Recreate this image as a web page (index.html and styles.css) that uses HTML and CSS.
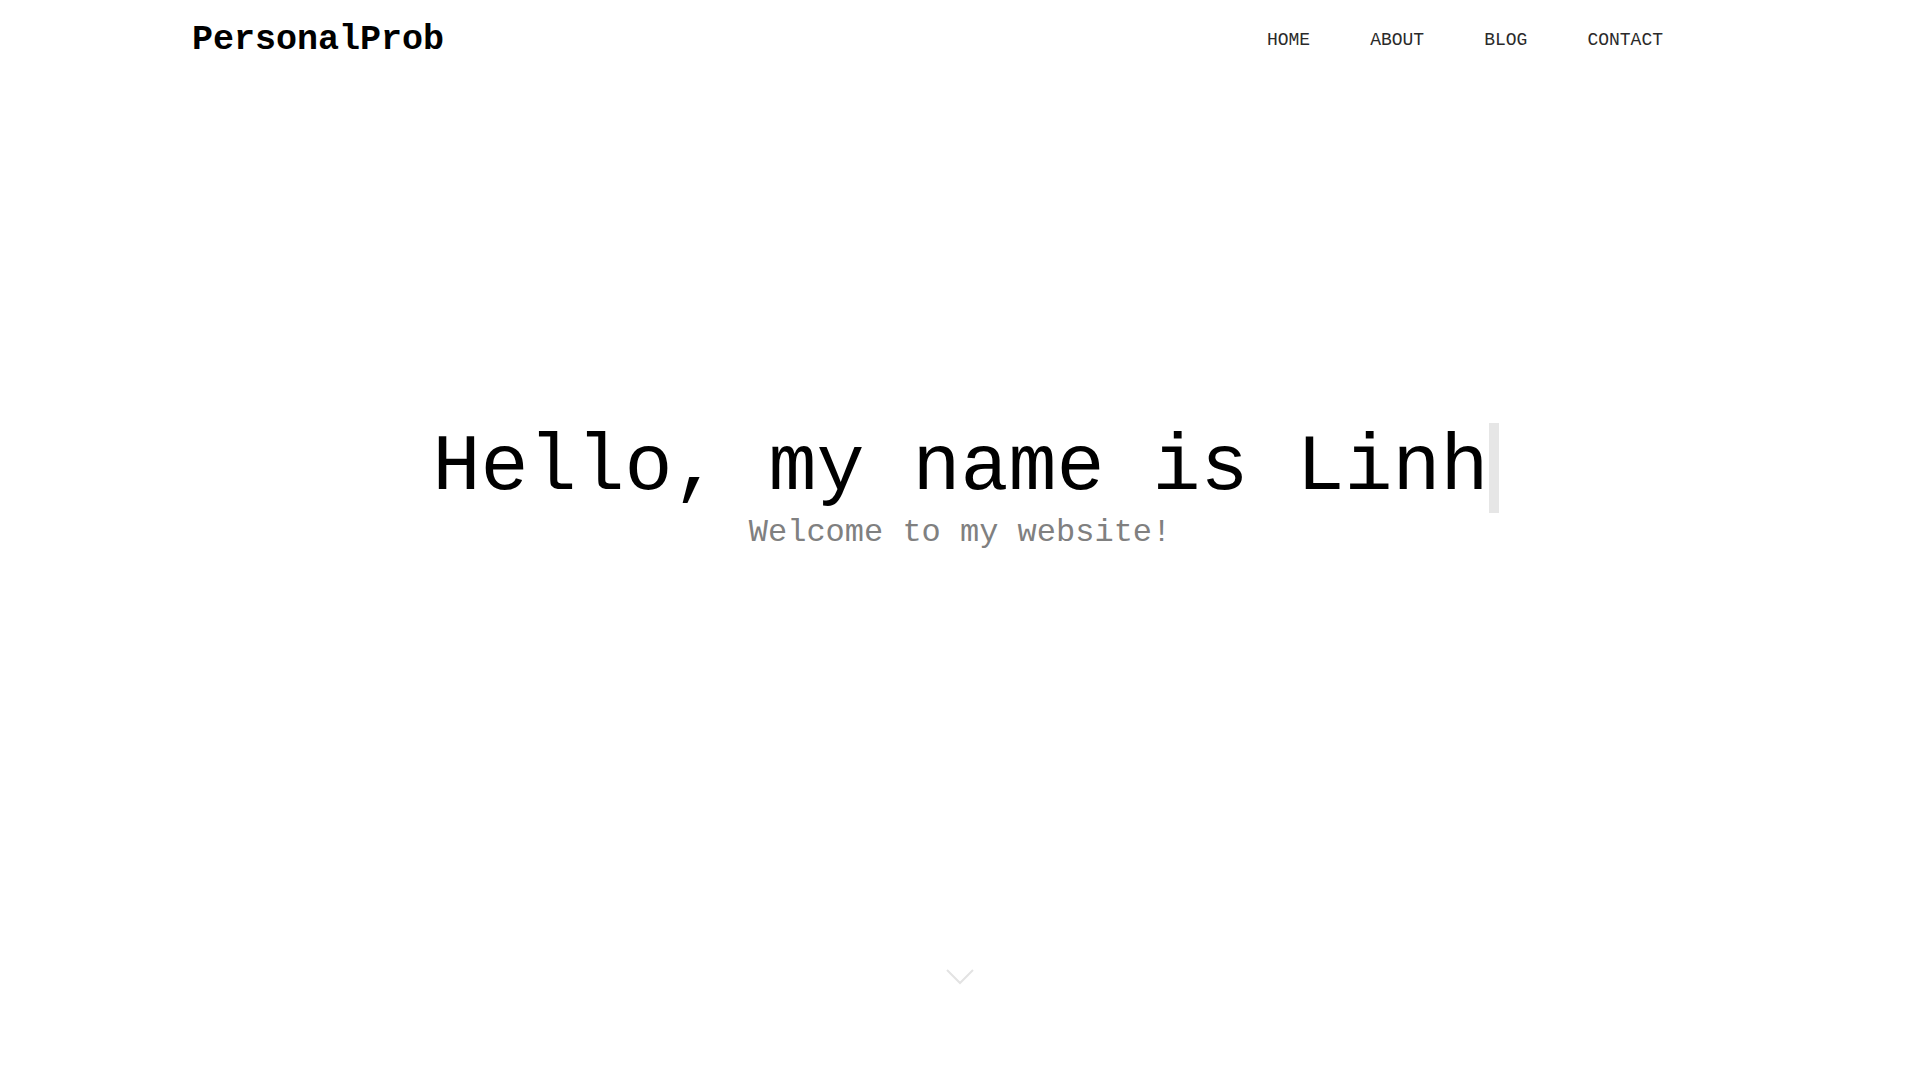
FILE: index.html
```html
<!DOCTYPE html>
<html lang="en">
<head>
<meta charset="utf-8">
<title>PersonalProb</title>
<link rel="stylesheet" href="styles.css">
</head>
<body>
<header class="site-header">
  <a class="logo" href="#">PersonalProb</a>
  <nav class="nav">
    <a href="#">HOME</a>
    <a href="#">ABOUT</a>
    <a href="#">BLOG</a>
    <a href="#">CONTACT</a>
  </nav>
</header>
<main class="hero">
  <h1 class="title"><span class="title-text">Hello, my name is Linh</span><span class="cursor"></span></h1>
  <p class="subtitle">Welcome to my website!</p>
  <div class="scroll-down">
    <svg width="28" height="16" viewBox="0 0 28 16"><polyline points="1,1 14,14 27,1" fill="none" stroke="#e3e3e3" stroke-width="2"/></svg>
  </div>
</main>
</body>
</html>
```
FILE: styles.css
```css
html, body {
  margin: 0;
  padding: 0;
  background: #fff;
  font-family: "Liberation Mono", "Courier New", monospace;
  color: #000;
}
.site-header {
  display: flex;
  align-items: center;
  justify-content: space-between;
  height: 80px;
  padding: 0 257px 0 192px;
}
.logo {
  font-size: 35px;
  font-weight: bold;
  color: #000;
  text-decoration: none;
}
.nav {
  display: flex;
  gap: 60px;
}
.nav a {
  font-size: 18px;
  color: #2a2a2a;
  text-decoration: none;
}
.hero {
  display: flex;
  flex-direction: column;
  align-items: center;
  padding-top: 343px;
}
.title {
  display: flex;
  align-items: center;
  margin: 0;
  padding-left: 11px;
  font-weight: normal;
  font-size: 80px;
  line-height: 90px;
}
.cursor {
  display: block;
  width: 10px;
  height: 90px;
  background: #e6e6e6;
}
.subtitle {
  margin: 2px 0 0;
  font-size: 32px;
  line-height: 36px;
  color: #808080;
}
.scroll-down {
  margin-top: 418px;
  line-height: 0;
}
```
